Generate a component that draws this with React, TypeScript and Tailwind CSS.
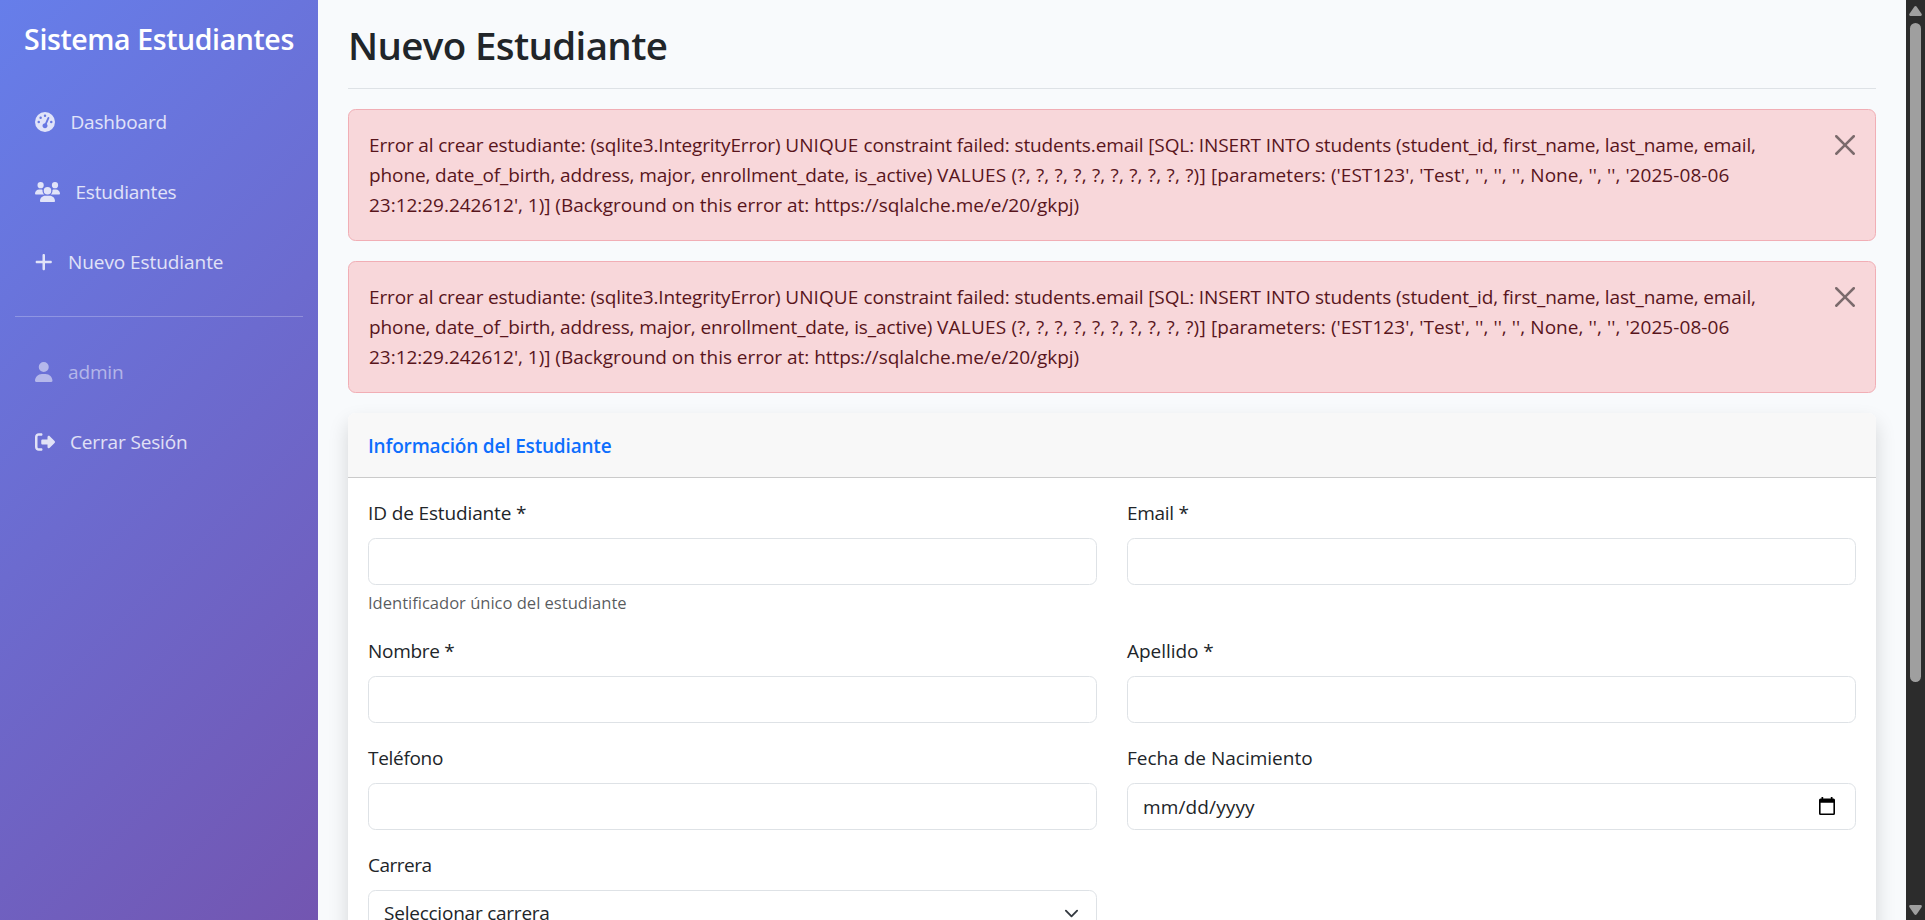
import React from "react";
import { FaGaugeHigh, FaUsers, FaPlus, FaUser, FaRightFromBracket } from "react-icons/fa6";

const ERROR_LINES = [
  [
    { text: "Error al crear estudiante: (sqlite3.IntegrityError) ", cls: "tracking-[-0.15px]" },
    { text: "UNIQUE ", cls: "tracking-[0.1px]" },
    { text: "constraint failed: students.email [SQL: INSERT INTO students (student_id, first_name, last_name, email,", cls: "tracking-[-0.12px]" },
  ],
  [
    { text: "phone, date_of_birth, address, major, enrollment_date, is_active) ", cls: "tracking-[-0.11px]" },
    { text: "VALUES (?, ?, ?, ?, ?, ?, ?, ?, ?, ?)] ", cls: "tracking-[0.2px]" },
    { text: "[parameters: ('EST123', 'Test', '', '', '', None, '', '', '2025-08-06", cls: "tracking-[0.06px]" },
  ],
  [{ text: "23:12:29.242612', 1)] (Background on this error at: https://sqlalche.me/e/20/gkpj)", cls: "tracking-[-0.03px]" }],
];

function ErrorAlert() {
  return (
    <div className="flex h-[132px] justify-between rounded-[7.5px] border border-[#f1aeb5] bg-[#f8d7da] pt-5 pl-5 text-[#58151c]">
      <div className="leading-[30px] whitespace-pre">
        {ERROR_LINES.map((line) => (
          <div key={line[0].text}>
            {line.map((part) => (
              <span key={part.text} className={part.cls}>{part.text}</span>
            ))}
          </div>
        ))}
      </div>
      <button aria-label="Close" className="mt-[5px] mr-5 h-5 w-5 opacity-50">
        <svg viewBox="0 0 16 16" className="h-5 w-5" fill="#000">
          <path d="M.293.293a1 1 0 0 1 1.414 0L8 6.586 14.293.293a1 1 0 1 1 1.414 1.414L9.414 8l6.293 6.293a1 1 0 0 1-1.414 1.414L8 9.414l-6.293 6.293a1 1 0 0 1-1.414-1.414L6.586 8 .293 1.707a1 1 0 0 1 0-1.414z" />
        </svg>
      </button>
    </div>
  );
}

type NavItemProps = { icon: React.ReactNode; label: string; iconBox: string; cls: string; color: string };

function NavItem({ icon, label, iconBox, cls, color }: NavItemProps) {
  return (
    <a className={`my-[5px] flex h-[60px] items-center px-5 ${color}`}>
      <span className={`${iconBox} flex shrink-0`}>{icon}</span>
      <span className={`whitespace-nowrap ${cls}`}>{label}</span>
    </a>
  );
}

type FieldProps = { label: string; cls: string; children?: React.ReactNode };

function Field({ label, cls, children }: FieldProps) {
  return (
    <div className="min-w-0">
      <label className="block h-[30px] leading-[30px] whitespace-nowrap">
        <span className={cls}>{label}</span>
      </label>
      <div className="mt-[10px] flex h-[47px] items-center justify-between rounded-[7.5px] border border-[#dee2e6] bg-white px-[15px]">
        {children}
      </div>
    </div>
  );
}

export default function App() {
  return (
    <div className="flex h-[920px] w-[1925px] overflow-hidden bg-[#f8fafc] font-['Open_Sans',sans-serif] text-[19px] text-[#212529]">
      <nav className="h-[1240px] w-[318px] shrink-0 bg-[linear-gradient(135deg,#667eea_0%,#764ba2_100%)] px-[15px]">
        <h4 className="mt-[21px] text-center text-[28.5px] leading-[36px] font-semibold whitespace-nowrap text-white">
          <span className="tracking-[-0.4px]">Sistema Estudiantes</span>
        </h4>
        <div className="mt-[30px] flex flex-col">
          <NavItem icon={<FaGaugeHigh className="h-5 w-5" />} iconBox="w-[35.5px]" label="Dashboard" cls="tracking-[-0.18px]" color="text-white/80" />
          <NavItem icon={<FaUsers className="h-5 w-[25px]" />} iconBox="w-[40.5px]" label="Estudiantes" cls="tracking-[-0.2px]" color="text-white/80" />
          <NavItem icon={<FaPlus className="h-5 w-[17.5px]" />} iconBox="w-[33px]" label="Nuevo Estudiante" cls="tracking-[-0.07px]" color="text-white/80" />
        </div>
        <div className="mt-[19px] mb-5 h-px bg-white/25" />
        <div className="flex flex-col">
          <NavItem icon={<FaUser className="h-5 w-[17.5px]" />} iconBox="w-[33px]" label="admin" cls="tracking-[-0.15px]" color="text-white/50" />
          <NavItem icon={<FaRightFromBracket className="h-5 w-5" />} iconBox="w-[35px]" label="Cerrar Sesión" cls="tracking-[-0.15px]" color="text-white/80" />
        </div>
      </nav>

      <main className="flex w-[1588px] shrink-0 flex-col px-[30px]">
        <div className="h-[89px] shrink-0 border-b border-[#dee2e6] pt-[21px]">
          <h1 className="text-[38.5px] leading-[48px] font-semibold whitespace-nowrap">
            <span className="tracking-[-0.65px]">Nuevo Estudiante</span>
          </h1>
        </div>
        <div className="mt-5 flex shrink-0 flex-col gap-5">
          <ErrorAlert />
          <ErrorAlert />
          <section className="rounded-[7.5px] bg-white shadow-[0_10px_20px_rgba(0,0,0,0.15)]">
            <header className="h-[65px] rounded-t-[7.5px] border-b border-[#cbcbcb] bg-[#f8f8f8] px-5 pt-[18px]">
              <h6 className="leading-[30px] font-semibold whitespace-nowrap text-[#0d6efd]">
                <span className="tracking-[-0.18px]">Información del Estudiante</span>
              </h6>
            </header>
            <div className="flex flex-col p-5">
              <div className="grid h-[138px] grid-cols-2 gap-x-[30px]">
                <div>
                  <Field label="ID de Estudiante *" cls="tracking-[-0.13px]" />
                  <p className="mt-[5px] text-[16.6px] leading-[26px] whitespace-nowrap text-[#212529]/75">
                    <span className="tracking-[-0.03px]">Identificador único del estudiante</span>
                  </p>
                </div>
                <Field label="Email *" cls="tracking-[-0.3px]" />
              </div>
              <div className="grid h-[107px] grid-cols-2 gap-x-[30px]">
                <Field label="Nombre *" cls="tracking-[-0.3px]" />
                <Field label="Apellido *" cls="tracking-[-0.05px]" />
              </div>
              <div className="grid h-[107px] grid-cols-2 gap-x-[30px]">
                <Field label="Teléfono" cls="tracking-[-0.3px]" />
                <Field label="Fecha de Nacimiento" cls="tracking-[0px]">
                  <span className="pt-[2px] tracking-[0.13px]">mm/dd/yyyy</span>
                  <svg viewBox="0 0 16 18" className="mr-[5px] mb-px h-[18px] w-4" fill="#000">
                    <path fillRule="evenodd" d="M2.5 0h1.7v1.5h7.6V0h1.7v1.5h1A1.5 1.5 0 0 1 16 3v13.5a1.5 1.5 0 0 1-1.5 1.5h-13A1.5 1.5 0 0 1 0 16.5V3a1.5 1.5 0 0 1 1.5-1.5h1zM1.6 5.7v10.7h12.800V5.7z" />
                  </svg>
                </Field>
              </div>
              <div className="grid h-[107px] grid-cols-2 gap-x-[30px]">
                <Field label="Carrera" cls="tracking-[-0.5px]">
                  <span className="tracking-[-0.23px]">Seleccionar carrera</span>
                  <svg viewBox="0 0 16 16" className="mr-[2px] h-[15px] w-[15px]" fill="none" stroke="#343a40" strokeWidth="2" strokeLinecap="round" strokeLinejoin="round">
                    <path d="m2 5 6 6 6-6" />
                  </svg>
                </Field>
              </div>
            </div>
          </section>
        </div>
      </main>

      <aside className="flex h-full w-[19px] shrink-0 flex-col items-center bg-[#2c2c2c]">
        <svg viewBox="0 0 13 10" className="mt-[6px] h-[10px] w-[13px] shrink-0" fill="#9f9f9f">
          <path d="M5.300.8Q6.500-.6 7.700.8L12.700 8Q13.200 9.700 11.700 9.900H1.300Q-.2 9.700.3 8z" />
        </svg>
        <div className="mt-[7px] h-[659px] w-[11px] shrink-0 rounded-full bg-[#9f9f9f]" />
        <svg viewBox="0 0 13 10" className="mt-auto mb-[5px] h-[10px] w-[13px] shrink-0 rotate-180" fill="#9f9f9f">
          <path d="M5.300.8Q6.500-.6 7.700.8L12.700 8Q13.200 9.700 11.700 9.900H1.300Q-.2 9.700.3 8z" />
        </svg>
      </aside>
    </div>
  );
}
